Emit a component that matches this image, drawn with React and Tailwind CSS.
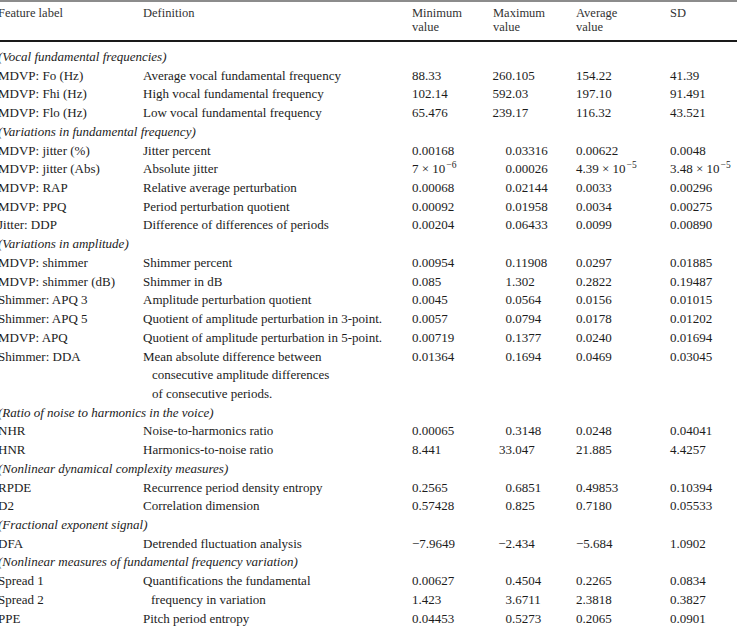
import React from "react";

const Sup = ({ base, exp }) => (
  <span>
    {base}
    <span className="relative top-[-5px] ml-[1px] text-[9.5px] leading-none">{exp}</span>
  </span>
);

const rows = [
  { sec: "(Vocal fundamental frequencies)" },
  { label: "MDVP: Fo (Hz)", def: ["Average vocal fundamental frequency"], min: "88.33", max: "260.105", avg: "154.22", sd: "41.39" },
  { label: "MDVP: Fhi (Hz)", def: ["High vocal fundamental frequency"], min: "102.14", max: "592.03", avg: "197.10", sd: "91.491" },
  { label: "MDVP: Flo (Hz)", def: ["Low vocal fundamental frequency"], min: "65.476", max: "239.17", avg: "116.32", sd: "43.521" },
  { sec: "(Variations in fundamental frequency)" },
  { label: "MDVP: jitter (%)", def: ["Jitter percent"], min: "0.00168", max: "0.03316", avg: "0.00622", sd: "0.0048" },
  {
    label: "MDVP: jitter (Abs)",
    def: ["Absolute jitter"],
    min: <Sup base={"7 \u00d7 10"} exp={"\u22126"} />,
    max: "0.00026",
    avg: <Sup base={"4.39 \u00d7 10"} exp={"\u22125"} />,
    sd: <Sup base={"3.48 \u00d7 10"} exp={"\u22125"} />,
  },
  { label: "MDVP: RAP", def: ["Relative average perturbation"], min: "0.00068", max: "0.02144", avg: "0.0033", sd: "0.00296" },
  { label: "MDVP: PPQ", def: ["Period perturbation quotient"], min: "0.00092", max: "0.01958", avg: "0.0034", sd: "0.00275" },
  { label: "Jitter: DDP", def: ["Difference of differences of periods"], min: "0.00204", max: "0.06433", avg: "0.0099", sd: "0.00890" },
  { sec: "(Variations in amplitude)" },
  { label: "MDVP: shimmer", def: ["Shimmer percent"], min: "0.00954", max: "0.11908", avg: "0.0297", sd: "0.01885" },
  { label: "MDVP: shimmer (dB)", def: ["Shimmer in dB"], min: "0.085", max: "1.302", avg: "0.2822", sd: "0.19487" },
  { label: "Shimmer: APQ 3", def: ["Amplitude perturbation quotient"], min: "0.0045", max: "0.0564", avg: "0.0156", sd: "0.01015" },
  { label: "Shimmer: APQ 5", def: ["Quotient of amplitude perturbation in 3-point."], min: "0.0057", max: "0.0794", avg: "0.0178", sd: "0.01202" },
  { label: "MDVP: APQ", def: ["Quotient of amplitude perturbation in 5-point."], min: "0.00719", max: "0.1377", avg: "0.0240", sd: "0.01694" },
  {
    label: "Shimmer: DDA",
    def: ["Mean absolute difference between", "consecutive amplitude differences", "of consecutive periods."],
    min: "0.01364",
    max: "0.1694",
    avg: "0.0469",
    sd: "0.03045",
  },
  { sec: "(Ratio of noise to harmonics in the voice)" },
  { label: "NHR", def: ["Noise-to-harmonics ratio"], min: "0.00065", max: "0.3148", avg: "0.0248", sd: "0.04041" },
  { label: "HNR", def: ["Harmonics-to-noise ratio"], min: "8.441", max: "33.047", avg: "21.885", sd: "4.4257" },
  { sec: "(Nonlinear dynamical complexity measures)" },
  { label: "RPDE", def: ["Recurrence period density entropy"], min: "0.2565", max: "0.6851", avg: "0.49853", sd: "0.10394" },
  { label: "D2", def: ["Correlation dimension"], min: "0.57428", max: "0.825", avg: "0.7180", sd: "0.05533" },
  { sec: "(Fractional exponent signal)" },
  { label: "DFA", def: ["Detrended fluctuation analysis"], min: "\u22127.9649", max: "\u22122.434", avg: "\u22125.684", sd: "1.0902" },
  { sec: "(Nonlinear measures of fundamental frequency variation)" },
  { label: "Spread 1", def: ["Quantifications the fundamental"], min: "0.00627", max: "0.4504", avg: "0.2265", sd: "0.0834" },
  { label: "Spread 2", def: [], indentDef: "frequency in variation", min: "1.423", max: "3.6711", avg: "2.3818", sd: "0.3827" },
  { label: "PPE", def: ["Pitch period entropy"], min: "0.04453", max: "0.5273", avg: "0.2065", sd: "0.0901" },
];

const grid = "grid grid-cols-[145px_269px_80px_84px_94px_1fr]";

function MaxVal({ v }) {
  const i = v.indexOf(".");
  const intPart = i >= 0 ? v.slice(0, i) : v;
  const rest = i >= 0 ? v.slice(i) : "";
  return (
    <span className="whitespace-nowrap">
      <span className="inline-block w-[20px] text-right">{intPart}</span>
      {rest}
    </span>
  );
}

function Row({ r }) {
  if (r.sec) {
    return <div className="italic whitespace-nowrap">{r.sec}</div>;
  }
  return (
    <div className={grid}>
      <div className="whitespace-nowrap">{r.label}</div>
      <div className="whitespace-nowrap">
        {r.def.map((d, k) => (
          <div key={k} className={k > 0 ? "pl-[9px]" : ""}>
            {d}
          </div>
        ))}
        {r.indentDef && <div className="pl-[8px]">{r.indentDef}</div>}
      </div>
      <div className="whitespace-nowrap">{r.min}</div>
      <div>
        <MaxVal v={r.max} />
      </div>
      <div className="whitespace-nowrap">{r.avg}</div>
      <div className="whitespace-nowrap">{r.sd}</div>
    </div>
  );
}

export default function App() {
  return (
    <div className="w-[737px] h-[631px] overflow-hidden bg-white font-['Liberation_Serif',serif] text-[#1c1c1c]">
      <div className="h-[2px] w-full bg-[#8c8c8c]" />
      <div className="ml-[-2px] pt-[4px]">
        <div className={`${grid} text-[12.5px] leading-[14px] text-[#333]`}>
          <div>Feature label</div>
          <div>Definition</div>
          <div>
            Minimum
            <br />
            value
          </div>
          <div className="pl-[1px]">
            Maximum
            <br />
            value
          </div>
          <div>
            Average
            <br />
            value
          </div>
          <div>SD</div>
        </div>
      </div>
      <div className="mt-[6px] h-[2px] w-full bg-[#1a1a1a]" />
      <div className="ml-[-2px] mt-[6px] text-[13px] leading-[18.72px]">
        {rows.map((r, k) => (
          <Row key={k} r={r} />
        ))}
      </div>
    </div>
  );
}
